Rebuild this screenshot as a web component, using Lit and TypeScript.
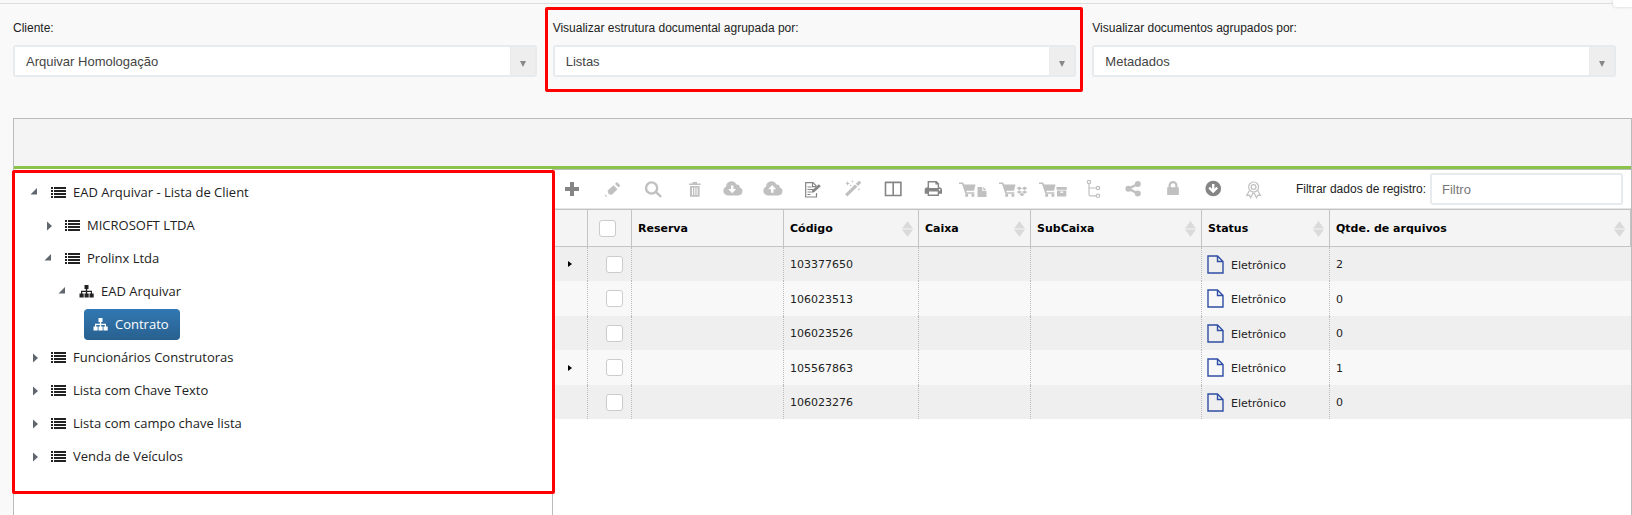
import { LitElement, html, css, svg, nothing, type TemplateResult } from "lit";
import { customElement, property, state } from "lit/decorators.js";
import { classMap } from "lit/directives/class-map.js";

const cart = svg`<path d="M2 3.5h4.2l.9 2H18.5l-1.400 6.200H9.300l.4 1.600h7.600v1.400H8.300L5 5H2z"/><path d="M8.300 15h2.800v2.800H8.300zM14.500 15h2.800v2.800h-2.800z"/>`;
const cloud = "M10.8 16.4a4.6 4.6 0 0 1-4.5-4.6 4.6 4.6 0 0 1 2.8-4.2A5.4 5.4 0 0 1 14.400 2.200a5.400 5.400 0 0 1 5 3.400 2.800 2.800 0 0 1 3.500 2.900 4.100 4.100 0 0 1-1.600 7.900z";

const icons: Record<string, TemplateResult> = {
  plus: svg`<path d="M13 3h4v5h5v4h-5v5h-4v-5H8V8h5z"/>`,
  pencil: svg`<path d="M10.500 11.800l6-5.600 4 4-5.600 5.600-3.200-.600zM18 4.800l2-1.800 3.300 3.600-1.800 2zM8.200 15.200l2.300 2.300H8.200z"/>`,
  search: svg`<g class="line thick"><circle cx="14.600" cy="9" r="5.600"/><path d="M19 13.200l4.400 4" stroke-linecap="round"/></g>`,
  trash: svg`<path fill-rule="evenodd" d="M12 4.500h3.500V3h4.500v1.500h3.500V6H12zM13 7h9.600v10.700H13zM15 8.500v7.500h1V8.500zm2.300 0v7.500h1V8.500zm2.300 0v7.500h1V8.500z"/>`,
  download: svg`<path fill-rule="evenodd" d="${cloud}M14 6.500v3.500h-2.800l4 4.300 4-4.300h-2.700V6.500z"/>`,
  upload: svg`<path fill-rule="evenodd" d="${cloud}M14 13.800v-3.600h-2.800l4-4.300 4 4.300h-2.700v3.600z"/>`,
  edit: svg`<g class="line"><path d="M19.500 14v4H8.700V3.700h7.300l3.500 3.500"/><path d="M15.500 3.700v4h3.500M10.500 8h4M10.500 10.500h6M10.500 13h4M10.500 15.500h3"/></g><path d="M14.500 13.800l.8-2.600 6.500-6 2 2-6.700 6z"/>`,
  wand: svg`<path d="M8 15.200L18 5.500l2.300 2.300L10.300 17.500zM18.800 4.800l3.300-3.300 2.200 2.200-3.300 3.300zM10.600 2l.7 1.700 1.700.7-1.700.7-.7 1.700-.7-1.700-1.700-.7 1.700-.7zM15.500 1l.4 1 1 .4-1 .4-.4 1-.4-1-1-.4 1-.4zM22 9l.4 1 1 .4-1 .4-.4 1-.4-1-1-.4 1-.4zM13.500 5.300l.3.800.8.300-.8.300-.3.800-.3-.8-.8-.3.800-.3z"/>`,
  columns: svg`<g class="line mid"><path d="M8.500 3.500h15.400v13H8.500zM16.200 3v13.500M8 3.200h16.400"/></g>`,
  print: svg`<path fill-rule="evenodd" d="M10.600 8.200V2h9l2.500 2.500v3.700c1.800 0 2.900 1 2.900 2.500v4.100h-3V17H10.600v-2.200H7.700v-4.100c0-1.500 1.100-2.500 2.900-2.500zM12 3.400v5.500h8.700V5.600h-2.300V3.400zM12 12.500v3h8.700v-3zM22.500 10a.8.800 0 1 0 .1 0z"/>`,
  cartFile: svg`${cart}<path d="M20.500 8h4.800v4h4.200v6h-9zM26.300 8l3.200 3.200h-3.200z"/>`,
  cartDropbox: svg`${cart}<path d="M22.300 7.500l2.700 1.800-2.700 1.900-2.700-1.900zM27.600 7.500l2.700 1.800-2.700 1.900-2.600-1.900zM22.300 11.400l2.700 1.700 2.600-1.700 2.700 1.600-2.700 1.700-2.600-1.700-2.700 1.700-2.600-1.700zM22.300 15.400l2.700-1.600 2.600 1.600-2.600 1.900z"/>`,
  cartBox: svg`${cart}<path fill-rule="evenodd" d="M19.500 8h10.300v2.800H19.500zM20 11.600h9.300v5.900H20zM23 12.600v1.100h3.300v-1.100z"/>`,
  branch: svg`<g class="line"><circle cx="12" cy="3" r="1.700"/><circle cx="21" cy="9" r="1.700"/><circle cx="21" cy="16.800" r="1.700"/><path d="M12 4.700v10.600q0 1.500 1.500 1.500h5.800M12 7.500q0 1.500 1.500 1.500h5.800"/></g>`,
  share: svg`<circle cx="20.800" cy="5" r="3"/><circle cx="11.400" cy="9.700" r="3"/><circle cx="20.800" cy="14.400" r="3"/><path class="line thick" d="M20.800 5l-9.400 4.700 9.400 4.700"/>`,
  lock: svg`<path fill-rule="evenodd" d="M10.200 8.300h1.300V6.500a4.500 4.500 0 0 1 9 0v1.800h1.300V16H10.200zM13.700 8.300h4.600V6.500a2.300 2.300 0 0 0-4.600 0z"/>`,
  arrowDown: svg`<path fill-rule="evenodd" d="M16.200 1.700a7.800 7.800 0 1 0 .1 0zM15 5h2.400v4.800l2-2 1.600 1.700-4.800 4.800-4.800-4.800L13 7.800l2 2z"/>`,
  award: svg`<g class="line"><circle cx="16.600" cy="8" r="5"/><circle cx="16.600" cy="8" r="2.400"/><path d="M12.500 11.500L9.700 16.500l2.700-.3 1.300 2.500 2.600-5.200M20.700 11.500l2.800 5-2.700-.3-1.300 2.500-2.600-5.200"/></g>`,
};

interface Tool { icon: string; label: string; on?: boolean }
const tools: Tool[] = [
  { icon: "plus", label: "Adicionar", on: true },
  { icon: "pencil", label: "Editar" },
  { icon: "search", label: "Pesquisar" },
  { icon: "trash", label: "Excluir" },
  { icon: "download", label: "Baixar" },
  { icon: "upload", label: "Enviar" },
  { icon: "edit", label: "Editar documento", on: true },
  { icon: "wand", label: "Assistente" },
  { icon: "columns", label: "Colunas", on: true },
  { icon: "print", label: "Imprimir", on: true },
  { icon: "cartFile", label: "Reservar documento" },
  { icon: "cartDropbox", label: "Reservar pasta" },
  { icon: "cartBox", label: "Reservar caixa" },
  { icon: "branch", label: "Fluxo" },
  { icon: "share", label: "Compartilhar" },
  { icon: "lock", label: "Bloquear" },
  { icon: "arrowDown", label: "Exportar", on: true },
  { icon: "award", label: "Certificar" },
];

interface Node { text: string; level: number; icon: "list" | "site"; open?: boolean; selected?: boolean }
const nodes: Node[] = [
  { text: "EAD Arquivar - Lista de Client", level: 0, icon: "list", open: true },
  { text: "MICROSOFT LTDA", level: 1, icon: "list" },
  { text: "Prolinx Ltda", level: 1, icon: "list", open: true },
  { text: "EAD Arquivar", level: 2, icon: "site", open: true },
  { text: "Contrato", level: 3, icon: "site", selected: true },
  { text: "Funcionários Construtoras", level: 0, icon: "list" },
  { text: "Lista com Chave Texto", level: 0, icon: "list" },
  { text: "Lista com campo chave lista", level: 0, icon: "list" },
  { text: "Venda de Veículos", level: 0, icon: "list" },
];

const columns = [
  { name: "Reserva", cls: "c-reserva", sort: false },
  { name: "Código", cls: "c-codigo", sort: true },
  { name: "Caixa", cls: "c-caixa", sort: true },
  { name: "SubCaixa", cls: "c-subcaixa", sort: true },
  { name: "Status", cls: "c-status", sort: true },
  { name: "Qtde. de arquivos", cls: "c-qtde", sort: true },
];

const rows = [
  { code: "103377650", count: 2 },
  { code: "106023513", count: 0 },
  { code: "106023526", count: 0 },
  { code: "105567863", count: 1 },
  { code: "106023276", count: 0 },
];

@customElement("select-field")
class SelectField extends LitElement {
  @property() label = "";
  @property() value = "";

  static styles = css`
    :host { display: block; font: 12px/20px "Liberation Sans", Arial, sans-serif; color: #222; }
    label { display: block; margin-bottom: 7px; }
    .box { display: flex; box-sizing: border-box; height: 32px; border: 2px solid #e7ebee; border-radius: 3px; background: #fff; }
    select { flex: 1; min-width: 0; appearance: none; border: 0; padding: 0 11px; background: #fff; font: 13px "Liberation Sans", Arial, sans-serif; color: #444; }
    .arrow { display: flex; width: 24px; align-items: center; justify-content: center; background: #eee; border-left: 1px solid #e7ebee; pointer-events: none; }
    .arrow svg { width: 6px; height: 6px; margin-top: 5px; fill: #888; }
  `;

  render() {
    return html`<label for="s">${this.label}</label>
      <div class="box">
        <select id="s"><option>${this.value}</option></select>
        <span class="arrow"><svg viewBox="0 0 6 6"><path d="M0 0h6L3 6z" /></svg></span>
      </div>`;
  }
}

@customElement("tree-view")
class TreeView extends LitElement {
  static styles = css`
    :host { display: block; font: 13px/33px "Open Sans", "Noto Sans", sans-serif; color: #222; }
    ul { list-style: none; margin: 0; padding: 6px 0 0 16px; }
    li { display: flex; align-items: center; height: 33px; }
    .l1 { padding-left: 14px; }
    .l2 { padding-left: 28px; }
    .l3 { padding-left: 42px; }
    .toggle { width: 8px; height: 20px; margin-right: 13px; padding: 0; border: 0; background: none; display: flex; align-items: center; }
    .toggle svg { width: 8px; height: 10px; fill: #5f666d; }
    .item { display: flex; align-items: center; gap: 7px; color: inherit; text-decoration: none; white-space: nowrap; }
    .item svg { width: 15px; height: 13px; fill: currentColor; }
    .l3 .item { height: 31px; box-sizing: border-box; padding: 0 11px 0 9px; margin-left: 12px; border-radius: 4px; color: #fff; background: linear-gradient(#3278b3, #28608f); }
  `;

  private glyph(kind: string) {
    return kind === "list"
      ? html`<svg viewBox="0 0 15 13"><path d="M0 1h2v2H0zM3 1h12v2H3zM0 4h2v2H0zM3 4h12v2H3zM0 7h2v2H0zM3 7h12v2H3zM0 10h2v2H0zM3 10h12v2H3z" /></svg>`
      : html`<svg viewBox="0 0 15 13"><path d="M5.500 0h4v4H8.200v1.800H13V8.500h1.700v4h-4.200v-4h1.300V7H8.200v1.500h1.500v4H5.500v-4H6.800V7H3.200v1.500h1.500v4H.500v-4H2V5.800h4.800V4H5.500z" /></svg>`;
  }

  render() {
    return html`<ul>
      ${nodes.map((n) => html`<li class="l${n.level}">
        ${n.selected ? nothing : html`<button class="toggle" aria-label=${n.open ? "Recolher" : "Expandir"}>
          <svg viewBox="0 0 8 10"><path d=${n.open ? "M7 0v6.500H.500z" : "M3 .500l5 4.500-5 4.500z"} /></svg>
        </button>`}
        <a class="item" href="#">${this.glyph(n.icon)}<span>${n.text}</span></a>
      </li>`)}
    </ul>`;
  }
}

@customElement("tool-bar")
class ToolBar extends LitElement {
  static styles = css`
    :host { display: flex; align-items: center; height: 38px; padding-right: 8px; font: 12px/20px "Liberation Sans", Arial, sans-serif; color: #222; border-bottom: 1px solid #e4e4e4; }
    button { width: 40px; height: 38px; padding: 0; border: 0; background: none; color: #858585; display: flex; align-items: center; justify-content: center; }
    button:disabled { color: #c0c0c0; }
    svg { width: 32px; height: 20px; fill: currentColor; }
    .line { fill: none; stroke: currentColor; stroke-width: 1.2; }
    .mid { stroke-width: 1.6; }
    .thick { stroke-width: 2.4; }
    label { margin-left: auto; white-space: nowrap; }
    input { box-sizing: border-box; width: 193px; height: 32px; margin-left: 4px; padding: 0 10px; border: 2px solid #e7ebee; border-radius: 3px; font: 13px "Liberation Sans", Arial, sans-serif; color: #444; }
    input::placeholder { color: #777; opacity: 1; }
  `;

  render() {
    return html`${tools.map((t) => html`<button aria-label=${t.label} ?disabled=${!t.on}><svg viewBox="0 0 32 20">${icons[t.icon]}</svg></button>`)}
      <label for="f">Filtrar dados de registro:</label><input id="f" type="text" placeholder="Filtro" />`;
  }
}

@customElement("record-table")
class RecordTable extends LitElement {
  @state() private checked = new Set<string>();

  static styles = css`
    :host { display: block; font: 11px/16px "DejaVu Sans", Verdana, sans-serif; color: #222; }
    table { width: 100%; table-layout: fixed; border-collapse: separate; border-spacing: 0; }
    th, td { box-sizing: border-box; padding: 2px 0 0 6px; text-align: left; }
    th { height: 38px; background: #f4f4f4; border: solid #c4c4c4; border-width: 1px 1px 1px 0; color: #000; font-weight: bold; }
    td { height: 34px; border-right: 1px dotted #bbb; background: #efefef; }
    tr:nth-child(even) td { height: 35px; background: #f8f8f8; }
    td:last-child { border-right: 0; }
    .c-toggle { width: 35px; }
    .c-check { width: 44px; }
    .c-reserva { width: 152px; }
    .c-codigo { width: 135px; }
    .c-caixa { width: 112px; }
    .c-subcaixa { width: 171px; }
    .c-status { width: 128px; }
    th.c-check { padding: 0 0 0 11px; }
    td.c-check { padding: 0 0 0 18px; }
    td.c-toggle { padding: 0 0 0 15px; }
    input { appearance: none; display: block; box-sizing: border-box; width: 17px; height: 17px; margin: 0; border: 1px solid #ccc; border-radius: 3px; background: #fff; }
    input:checked { background: #337ab7; }
    .head { display: flex; align-items: center; justify-content: space-between; padding-right: 5px; }
    .sort { width: 11px; height: 16px; fill: #dadada; }
    .expand { display: block; padding: 0; border: 0; background: none; }
    .expand svg { display: block; width: 4px; height: 6px; }
    .status { display: flex; align-items: flex-start; gap: 7px; margin-left: -1px; }
    .status svg { width: 17px; height: 19px; fill: none; stroke: #2f4fa5; stroke-width: 1.4; }
    .status span { padding-top: 3px; }
    td.c-status { padding-top: 0; }
  `;

  private toggle(code: string) {
    const next = new Set(this.checked);
    next.has(code) ? next.delete(code) : next.add(code);
    this.checked = next;
  }

  render() {
    return html`<table>
      <thead><tr>
        <th class="c-toggle"></th>
        <th class="c-check"><input type="checkbox" aria-label="Selecionar todos" /></th>
        ${columns.map((c) => html`<th class=${c.cls}><div class="head"><span>${c.name}</span>
          ${c.sort ? html`<svg class="sort" viewBox="0 0 11 16"><path d="M0 7.500L5.500 0 11 7.500zM0 8.500h11L5.500 16z" /></svg>` : nothing}</div></th>`)}
      </tr></thead>
      <tbody>
        ${rows.map((r) => html`<tr class=${classMap({ selected: this.checked.has(r.code) })}>
          <td class="c-toggle">${r.count ? html`<button class="expand" aria-label="Expandir"><svg viewBox="0 0 4 6"><path d="M0 0l4 3-4 3z" /></svg></button>` : nothing}</td>
          <td class="c-check"><input type="checkbox" aria-label="Selecionar ${r.code}" .checked=${this.checked.has(r.code)} @change=${() => this.toggle(r.code)} /></td>
          <td></td>
          <td>${r.code}</td>
          <td></td>
          <td></td>
          <td class="c-status"><div class="status"><svg viewBox="0 0 17 19"><path d="M1 1h9.500L16 6.500V18H1zM10.500 1v5.500H16" /></svg><span>Eletrônico</span></div></td>
          <td>${r.count}</td>
        </tr>`)}
      </tbody>
    </table>`;
  }
}

@customElement("app-root")
class AppRoot extends LitElement {
  static styles = css`
    :host { display: flex; flex-direction: column; position: relative; box-sizing: border-box; min-height: 100vh; padding-top: 3px; background: #f9f9f9; overflow: hidden; }
    .filters { display: grid; grid-template-columns: repeat(3, 1fr); gap: 16px; padding: 14px 16px 41px 13px; border-top: 1px solid #ddd; }
    .marked { position: relative; }
    .mark { position: absolute; box-sizing: border-box; border: 3px solid #f00; border-radius: 2px; pointer-events: none; }
    .mark-field { inset: -11px -7px -15px -8px; }
    .mark-tree { inset: 0 -3px 0 -2px; }
    .corner { position: absolute; top: 0; right: 0; width: 19px; height: 7px; background: #fff; border-radius: 0 0 0 3px; box-shadow: 0 0 3px #ccc; }
    .panel { flex: 1; display: flex; flex-direction: column; margin-left: 13px; border: 1px solid #bbb; border-bottom: 0; background: #fff; }
    .band { height: 47px; background: #f4f4f4; border-bottom: 3px solid #8bc34a; }
    .split { flex: 1; display: grid; grid-template-columns: 1fr 2fr; }
    .side { border-right: 1px solid #bbb; padding-top: 1px; }
    .tree { position: relative; padding-bottom: 21px; }
    .main { min-width: 0; border-top: 1px solid #bbb; }
  `;

  render() {
    return html`
      <div class="corner"></div>
      <div class="filters">
        <select-field label="Cliente:" value="Arquivar Homologação"></select-field>
        <div class="marked">
          <select-field label="Visualizar estrutura documental agrupada por:" value="Listas"></select-field>
          <div class="mark mark-field"></div>
        </div>
        <select-field label="Visualizar documentos agrupados por:" value="Metadados"></select-field>
      </div>
      <div class="panel">
        <div class="band"></div>
        <div class="split">
          <div class="side">
            <div class="tree"><tree-view></tree-view><div class="mark mark-tree"></div></div>
          </div>
          <div class="main"><tool-bar></tool-bar><record-table></record-table></div>
        </div>
      </div>`;
  }
}
